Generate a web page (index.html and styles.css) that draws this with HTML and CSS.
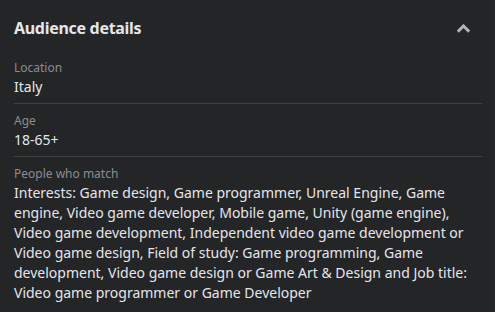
FILE: index.html
```html
<!DOCTYPE html>
<html lang="en">
<head>
    <meta charset="UTF-8">
    <title>Audience details</title>
    <link rel="stylesheet" href="styles.css">
</head>
<body>
    <div class="panel">
        <div class="panel-head">
            <h2>Audience details</h2>
            <svg class="chevron" width="15" height="9" viewBox="0 0 15 9">
                <path d="M1.8 7.6 L7.5 2 L13.2 7.6" fill="none" stroke="#b0b3b8" stroke-width="3"/>
            </svg>
        </div>
        <div class="row">
            <div class="label">Location</div>
            <div class="value">Italy</div>
        </div>
        <div class="row">
            <div class="label">Age</div>
            <div class="value">18-65+</div>
        </div>
        <div class="row last">
            <div class="label">People who match</div>
            <div class="value">Interests: Game design, Game programmer, Unreal Engine, Game engine, Video game developer, Mobile game, Unity (game engine), Video game development, Independent video game development or Video game design, Field of study: Game programming, Game development, Video game design or Game Art &amp; Design and Job title: Video game programmer or Game Developer</div>
        </div>
    </div>
</body>
</html>
```
FILE: styles.css
```css
body {
    margin: 0;
    background: #242527;
    font-family: "Noto Sans", "Open Sans", sans-serif;
    color: #e4e6eb;
}
.panel {
    padding: 14px 13px 0 14px;
}
.panel-head {
    display: flex;
    justify-content: space-between;
    align-items: center;
    height: 28px;
    margin-bottom: 17px;
}
.panel-head h2 {
    margin: 0;
    font-size: 16px;
    font-weight: bold;
    letter-spacing: -0.3px;
    color: #e4e6eb;
}
.chevron {
    margin-right: 11px;
}
.row {
    border-bottom: 1px solid #3e4042;
    padding-bottom: 6px;
    margin-bottom: 8px;
}
.row.last {
    border-bottom: none;
}
.label {
    font-size: 12px;
    color: #8a8d91;
    line-height: 18px;
}
.value {
    font-size: 14px;
    line-height: 20px;
}
```
